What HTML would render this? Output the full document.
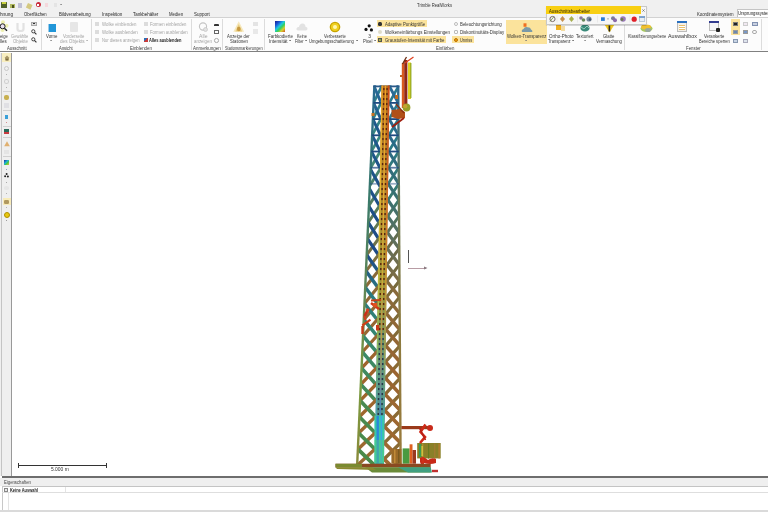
<!DOCTYPE html>
<html><head><meta charset="utf-8">
<style>
*{margin:0;padding:0;box-sizing:border-box}
html,body{width:768px;height:512px;overflow:hidden;background:#fff;font-family:"Liberation Sans",sans-serif;color:#222}
.a{position:absolute;white-space:nowrap;line-height:1;transform-origin:0 0}
.t{font-size:4.9px}
.g{color:#a8a8a8}
.tab{font-size:5.2px;top:11.6px;color:#333}
.lbl{font-size:4.9px;top:45.6px;color:#444}
.sep{position:absolute;top:19px;width:1px;height:31px;background:#dcdcdc}
.hl{position:absolute;background:#fbe39c}
</style></head><body>
<div id="root" style="position:absolute;left:0;top:0;width:768px;height:512px;overflow:hidden;will-change:transform;background:#fff">
<!-- title/tab bar -->
<div class="a" style="left:0;top:0;width:768px;height:17px;background:#f0f0f0"></div>
<div class="a" style="left:0;top:16.8px;width:768px;height:1.2px;background:#d2d2d2"></div>
<!-- ribbon body -->
<div class="a" style="left:0;top:18px;width:768px;height:33.5px;background:#fcfcfc"></div>
<div class="a" style="left:0;top:51.2px;width:768px;height:1.3px;background:#808080"></div>
<!-- title -->
<!-- tabs -->
<div class="a" style="left:736.6px;top:8.6px;width:40px;height:8.6px;background:#fff;border:0.6px solid #c4c4c4;border-bottom:none"></div>
<!-- separators -->
<div class="sep" style="left:41px"></div>
<div class="sep" style="left:90.5px"></div>
<div class="sep" style="left:190.5px"></div>
<div class="sep" style="left:222.3px"></div>
<div class="sep" style="left:264px"></div>
<div class="sep" style="left:624.4px"></div>
<div class="sep" style="left:761px"></div>
<!-- group labels -->

<!-- Ausschnitt -->
<svg class="a" style="left:-1px;top:20px" width="10" height="13" viewBox="0 0 10 13"><circle cx="4" cy="2.2" r="2" fill="#eef0b0"/><circle cx="7.5" cy="5.8" r="2" fill="#eef0b0"/><circle cx="3.5" cy="10" r="2" fill="#eef0b0"/><circle cx="3.6" cy="6.3" r="2.5" fill="#e8e0f0" stroke="#222" stroke-width="1"/><line x1="5.4" y1="8.2" x2="8" y2="10.8" stroke="#222" stroke-width="1.5"/></svg>
<svg class="a" style="left:15.5px;top:21px" width="9" height="11" viewBox="0 0 9 11"><path d="M1.5 2 L1.5 8 Q1.5 10 4.5 10 Q7.5 10 7.5 8 L7.5 2" fill="none" stroke="#e2e2e2" stroke-width="2.2"/></svg>
<div class="a" style="left:31px;top:21.5px;width:5.5px;height:4px;background:#ddd;border:0.5px solid #aaa"></div>
<div class="a" style="left:32.6px;top:22.8px;width:2px;height:1px;background:#333"></div>
<svg class="a" style="left:31px;top:28.5px" width="6" height="6" viewBox="0 0 6 6"><circle cx="2.3" cy="2.3" r="1.6" fill="none" stroke="#333" stroke-width=".9"/><line x1="3.4" y1="3.4" x2="5.4" y2="5.4" stroke="#333" stroke-width="1.1"/></svg>
<svg class="a" style="left:31px;top:36.5px" width="6" height="6" viewBox="0 0 6 6"><circle cx="2.3" cy="2.3" r="1.6" fill="none" stroke="#333" stroke-width=".9"/><line x1="3.4" y1="3.4" x2="5.4" y2="5.4" stroke="#333" stroke-width="1.1"/></svg>

<!-- Ansicht -->
<div class="a" style="left:49px;top:23.8px;width:7.3px;height:7.8px;background:#2196d8;box-shadow:-1px 0 0 #9ccbe8"></div>
<div class="a" style="left:70px;top:22px;width:8px;height:9.5px;background:#e6e6e6;border-radius:1px"></div>

<!-- Einblenden -->
<div class="a" style="left:95px;top:22px;width:3.5px;height:3.5px;background:#dcdcdc"></div>
<div class="a" style="left:95px;top:30px;width:3.5px;height:3.5px;background:#dcdcdc"></div>
<div class="a" style="left:95px;top:38.2px;width:3.5px;height:3.5px;background:#dcdcdc"></div>
<div class="a" style="left:144px;top:22px;width:3.5px;height:3.5px;background:#dcdcdc"></div>
<div class="a" style="left:144px;top:30px;width:3.5px;height:3.5px;background:#dcdcdc"></div>
<div class="a" style="left:143.5px;top:38.2px;width:4px;height:4px;background:linear-gradient(135deg,#2a6fb8 50%,#c83a3a 50%)"></div>

<!-- Anmerkungen -->
<svg class="a" style="left:197.5px;top:22px" width="12" height="11" viewBox="0 0 12 11"><circle cx="5" cy="4.5" r="3.6" fill="none" stroke="#c4c4c4" stroke-width="1.1"/><circle cx="7.5" cy="7.5" r="2" fill="#e2e2e2" stroke="#c4c4c4" stroke-width=".7"/></svg>
<div class="a" style="left:214px;top:23.5px;width:5px;height:2.5px;background:#333;border-radius:1px 1px 0 0"></div>
<div class="a" style="left:214px;top:30px;width:5px;height:4px;border:0.7px solid #666"></div>
<div class="a" style="left:214.3px;top:38px;width:4.5px;height:4.5px;border:0.6px solid #aaa;border-radius:50%"></div>

<!-- Stationsmarkierungen -->
<svg class="a" style="left:232.5px;top:20.8px" width="11.5" height="11" viewBox="0 0 11.5 11"><path d="M5.75 0.3 L11.2 10.8 L0.3 10.8 Z" fill="#f6e8bc"/><path d="M5.75 3 L9.2 10.5 L2.3 10.5Z" fill="#e8cc80"/><ellipse cx="5.75" cy="8" rx="1.8" ry="2.2" fill="#c89a40"/></svg>
<div class="a" style="left:252.5px;top:21.5px;width:5px;height:4.5px;background:#e4e4e4"></div>
<div class="a" style="left:252.5px;top:29px;width:5px;height:4.5px;background:#e8e8e8"></div>

<!-- Einfärben -->
<div class="a" style="left:274.6px;top:21.4px;width:10.8px;height:10.2px;background:linear-gradient(135deg,#1a1a8c 0%,#1a58d8 25%,#20c8e0 45%,#30d060 60%,#d8d030 78%,#d05020 100%)"></div>
<svg class="a" style="left:295.5px;top:22px" width="12" height="10" viewBox="0 0 12 10"><path d="M2 8.5 Q0 8.5 0.5 6.5 Q1 4.5 3 5 Q3.5 1.5 6.5 1.5 Q9.5 1.8 9.5 4.8 Q11.8 5 11.5 7 Q11 8.5 9.5 8.5Z" fill="#e2e2e2"/></svg>
<svg class="a" style="left:328.5px;top:20.8px" width="12" height="12" viewBox="0 0 12 12"><circle cx="6" cy="6" r="5.3" fill="#c8a400"/><circle cx="6" cy="6" r="4" fill="#f0d020"/><circle cx="6" cy="6" r="2" fill="#fff8b0"/></svg>
<svg class="a" style="left:364px;top:23.5px" width="10" height="8" viewBox="0 0 10 8"><circle cx="5.2" cy="1.8" r="1.6" fill="#111"/><circle cx="2" cy="5.4" r="1.6" fill="#111"/><circle cx="7.4" cy="5.9" r="1.6" fill="#111"/></svg>

<div class="hl" style="left:376.5px;top:20.2px;width:50px;height:7.2px"></div>
<div class="hl" style="left:376.5px;top:36.4px;width:69.2px;height:6.8px"></div>
<div class="a" style="left:378px;top:21.5px;width:3.5px;height:4px;background:#333;border-radius:40%"></div>
<div class="a" style="left:378px;top:30px;width:4px;height:4px;background:#dedbc8;border-radius:50%"></div>
<div class="a" style="left:378px;top:37.8px;width:4px;height:4px;border:0.6px solid #555;background:linear-gradient(45deg,#e0c040,#60a040)"></div>

<div class="a" style="left:453.5px;top:21.8px;width:4px;height:4px;border:0.6px solid #bbb;border-radius:50%"></div>
<div class="a" style="left:453.5px;top:30px;width:4px;height:4px;border:0.6px solid #bbb;border-radius:1px"></div>
<div class="hl" style="left:451.7px;top:36.4px;width:22.2px;height:6.8px"></div>
<div class="a" style="left:453.5px;top:37.5px;width:4.4px;height:4.4px;background:#e8a010;border-radius:50%;border:0.6px solid #c07000"></div>

<div class="hl" style="left:506px;top:19.8px;width:40.7px;height:23.9px"></div>
<svg class="a" style="left:520.5px;top:22.5px" width="12" height="10" viewBox="0 0 12 10"><rect x="2.5" y="0.3" width="3" height="3.5" fill="#f07020"/><path d="M1 9 Q0.2 6.5 2.5 6 Q3.5 3.5 6.5 4.2 Q9.5 4 10 6.5 Q11.8 7 11.3 9Z" fill="#7a9aa8"/></svg>

<div class="a" style="left:556px;top:24.4px;width:5px;height:6px;background:#f0b020"></div>
<div class="a" style="left:561px;top:25.5px;width:3.5px;height:5px;background:#f4dca0"></div>
<svg class="a" style="left:579.5px;top:23.5px" width="10" height="8" viewBox="0 0 10 8"><ellipse cx="5" cy="4" rx="4.6" ry="3.6" fill="#3a8a7a"/><path d="M1 3 L4 5 L7 2 L9 4" stroke="#a8d8c8" stroke-width=".8" fill="none"/></svg>
<svg class="a" style="left:603.5px;top:23.5px" width="11" height="9" viewBox="0 0 11 9"><path d="M0.5 0.5 L10.5 0.5 L5.5 8.5Z" fill="#f0c820"/><rect x="4.6" y="1.5" width="1.6" height="6" fill="#222"/></svg>

<!-- Fenster -->
<svg class="a" style="left:639.5px;top:22.5px" width="13" height="10" viewBox="0 0 13 10"><ellipse cx="6.5" cy="5.5" rx="6" ry="3.5" fill="#a8c860"/><ellipse cx="6" cy="4" rx="5" ry="2.4" fill="#f0c030"/><ellipse cx="8" cy="7" rx="3" ry="2" fill="#98a8a0"/></svg>
<div class="a" style="left:677px;top:21px;width:9.7px;height:11px;background:#f4f0e8;border:0.5px solid #bbb"></div>
<div class="a" style="left:677px;top:21px;width:9.7px;height:2px;background:#2a70c0"></div>
<div class="a" style="left:678.5px;top:25px;width:6.5px;height:5px;background:repeating-linear-gradient(0deg,#e8c070 0 1px,#fff 1px 2px)"></div>
<div class="a" style="left:709px;top:21px;width:10px;height:10px;background:#f4f4f8;border:0.5px solid #bbb"></div>
<div class="a" style="left:709px;top:21px;width:10px;height:1.8px;background:#303a90"></div>
<div class="a" style="left:716px;top:27.5px;width:4px;height:4.5px;background:#222;border-radius:1px"></div>
<div class="hl" style="left:731px;top:19.4px;width:9px;height:16.1px"></div>
<div class="a" style="left:733px;top:21.5px;width:5px;height:4px;background:#222;border:0.6px solid #777"></div>
<div class="a" style="left:733px;top:29.5px;width:5px;height:4.5px;background:#6a8ab0;border:0.5px solid #999"></div>
<div class="a" style="left:733px;top:38.5px;width:5px;height:4px;background:#c8d4e4;border:0.5px solid #8898b0"></div>
<div class="a" style="left:742.5px;top:21.5px;width:5px;height:4.5px;background:#f0e8f0;border:0.5px solid #ccc"></div>
<div class="a" style="left:742.5px;top:29.5px;width:5px;height:4.5px;background:#7898c8;border:0.5px solid #999"></div>
<div class="a" style="left:742.5px;top:38.5px;width:5px;height:4px;background:#dde4ec;border:0.5px solid #aab"></div>
<div class="a" style="left:751.5px;top:21.5px;width:6px;height:4.5px;background:#c8d0e0;border:0.5px solid #8090b0"></div>
<div class="a" style="left:752px;top:29.5px;width:4.5px;height:4.5px;border:0.6px solid #aaa;border-radius:50%"></div>

<!-- quick access -->
<div class="a" style="left:1px;top:2px;width:6px;height:5.5px;background:#50602a;border-radius:0.5px"></div>
<div class="a" style="left:2.2px;top:2.4px;width:3.6px;height:2px;background:#c8d040"></div>
<div class="a" style="left:10px;top:3.5px;width:5px;height:4px;background:#b0b860"></div>
<div class="a" style="left:11.5px;top:4.5px;width:2.5px;height:3px;background:#4a5020"></div>
<div class="a" style="left:18px;top:3px;width:3.8px;height:4.5px;background:#c0c0d4"></div>
<div class="a" style="left:27.5px;top:3px;width:5px;height:4.5px;background:#d4c880;transform:rotate(25deg)"></div>
<div class="a" style="left:35.5px;top:2.3px;width:5px;height:5px;background:#c82838;border-radius:50%"></div>
<div class="a" style="left:37.2px;top:3.5px;width:1.8px;height:2px;background:#fff"></div>
<div class="a" style="left:45px;top:3px;width:2.5px;height:3.5px;background:#f4d8dc"></div>
<div class="a" style="left:54px;top:3px;width:3px;height:3.5px;background:#e4e4e4"></div>

<!-- floating toolbar -->
<div class="a" style="left:545.8px;top:5.5px;width:101.4px;height:19.4px;background:#f6f6f6;border:0.6px solid #c8c8c8;box-shadow:0 0.5px 1px rgba(0,0,0,.15)"></div>
<div class="a" style="left:546.2px;top:5.9px;width:94.6px;height:7.8px;background:#f8cf12"></div>
<svg class="a" style="left:546px;top:14px" width="101" height="10" viewBox="0 0 101 10">
 <circle cx="6.5" cy="5" r="2.6" fill="none" stroke="#7a6a6a" stroke-width="1"/><path d="M4 7.5 L8 2.5" stroke="#6a8a40" stroke-width=".8"/>
 <line x1="11" y1="1.5" x2="11" y2="8.5" stroke="#ddd" stroke-width=".5"/>
 <path d="M16.5 2 L19 5 L16.5 8 L14 5Z" fill="#c89050"/>
 <path d="M25.5 2 L28 5 L25.5 8 L23 5Z" fill="#a8b050"/>
 <line x1="31.5" y1="1.5" x2="31.5" y2="8.5" stroke="#ddd" stroke-width=".5"/>
 <circle cx="35" cy="4" r="1.8" fill="#8a7a9a"/><circle cx="37.5" cy="6" r="1.8" fill="#6a8a5a"/>
 <circle cx="43" cy="5" r="2.6" fill="#7a8aa0"/><circle cx="44" cy="5.5" r="1.3" fill="#4a5a70"/>
 <line x1="51.5" y1="1.5" x2="51.5" y2="8.5" stroke="#ddd" stroke-width=".5"/>
 <rect x="55" y="3.3" width="3.8" height="3.6" fill="#2a7ad0"/>
 <path d="M61 4.5 L63 4.5 L62 5.7Z" fill="#888"/>
 <circle cx="67" cy="4.2" r="2" fill="#7a7a9a"/><circle cx="69" cy="6.2" r="2" fill="#8a6aaa"/>
 <circle cx="77" cy="5" r="2.8" fill="#9a7ab8"/><circle cx="76" cy="5.5" r="1.4" fill="#6a7a50"/>
 <line x1="84" y1="1.5" x2="84" y2="8.5" stroke="#ddd" stroke-width=".5"/>
 <circle cx="88.2" cy="5.2" r="2.6" fill="#e0202a"/>
 <rect x="93.3" y="2.5" width="5.5" height="5" fill="#e8eef4" stroke="#8aa0b8" stroke-width=".5"/><rect x="93.3" y="2.5" width="5.5" height="1.2" fill="#4a80c0"/>
</svg>
<!-- left strip -->
<div class="a" style="left:0;top:52.6px;width:12.2px;height:423.6px;background:#efefef"></div>
<div class="a" style="left:1.2px;top:52.6px;width:0.8px;height:423.6px;background:#c4c4c4"></div>
<div class="a" style="left:10.9px;top:52.6px;width:1.3px;height:423.6px;background:#999"></div>
<div class="a" style="left:2px;top:53.2px;width:8.8px;height:9px;background:#f8eec0"></div>
<svg class="a" style="left:3.5px;top:54.8px" width="6" height="6" viewBox="0 0 6 6"><path d="M0.5 3 L3 0.5 L5.5 3 L5 3 L5 5.5 L1 5.5 L1 3Z" fill="#a89868"/><rect x="2.3" y="3.8" width="1.4" height="1.7" fill="#6a5a30"/></svg>
<div class="a" style="left:4px;top:66px;width:5px;height:5px;border:0.8px solid #c8c8c8;border-radius:50%"></div>
<div class="a" style="left:3.8px;top:78.5px;width:5.4px;height:5px;border:0.8px solid #cfcfcf;border-radius:50%"></div>
<div class="a" style="left:2.5px;top:90.8px;width:8px;height:0.6px;background:#d4d4d4"></div>
<div class="a" style="left:4px;top:94.5px;width:5px;height:5px;background:#c8b050;border-radius:40%"></div>
<div class="a" style="left:4px;top:103px;width:5px;height:4.5px;background:#e0e0e4"></div>
<div class="a" style="left:2.5px;top:110px;width:8px;height:0.6px;background:#d0d0d0"></div>
<div class="a" style="left:4.6px;top:115px;width:3.6px;height:3.6px;background:#3aa0d8"></div>
<div class="a" style="left:2.5px;top:126px;width:8px;height:0.6px;background:#d0d0d0"></div>
<div class="a" style="left:4px;top:129px;width:5px;height:5px;background:linear-gradient(180deg,#2a6a5a 60%,#c83a40 60%)"></div>
<div class="a" style="left:2.5px;top:137px;width:8px;height:0.6px;background:#d0d0d0"></div>
<svg class="a" style="left:3.5px;top:141.2px" width="6" height="5.5" viewBox="0 0 6 5.5"><path d="M3 0.3 L5.8 5.3 L0.2 5.3Z" fill="#e0b070"/></svg>
<div class="a" style="left:4px;top:149.5px;width:5px;height:4.5px;background:#e4e4e4"></div>
<div class="a" style="left:2.5px;top:156px;width:8px;height:0.6px;background:#d0d0d0"></div>
<div class="a" style="left:4px;top:160px;width:5px;height:5px;background:linear-gradient(135deg,#1a2a9a,#20b8d8 45%,#40c850 60%,#e0c030)"></div>
<svg class="a" style="left:3.8px;top:173px" width="5" height="5" viewBox="0 0 5 5"><circle cx="2.6" cy="1.1" r="1" fill="#222"/><circle cx="1.1" cy="3.3" r="1" fill="#222"/><circle cx="3.9" cy="3.6" r="1" fill="#222"/></svg>
<div class="a" style="left:3.8px;top:186px;width:5.4px;height:4px;background:#e6e6e6;border-radius:50%"></div>
<div class="a" style="left:2.5px;top:198px;width:8px;height:7px;background:#f8ebb8"></div>
<div class="a" style="left:4.2px;top:199.5px;width:4.5px;height:4px;background:#b09860;border-radius:30%"></div>
<div class="a" style="left:3.5px;top:212px;width:6px;height:6px;background:#e8c810;border-radius:50%;border:0.8px solid #b09000"></div>

<!-- viewport bottom + properties -->
<div class="a" style="left:2px;top:475.8px;width:766px;height:2px;background:#6e6e6e"></div>
<div class="a" style="left:0;top:477.8px;width:768px;height:8.6px;background:#efefef"></div>
<div class="a" style="left:2px;top:486.3px;width:766px;height:0.7px;background:#c4c4c4"></div>
<div class="a" style="left:2px;top:487px;width:766px;height:24px;background:#fff"></div>
<div class="a" style="left:2.2px;top:486px;width:0.7px;height:25px;background:#c8c8c8"></div>
<div class="a" style="left:8.2px;top:492.5px;width:0.5px;height:18px;background:#e4e4e4"></div>
<div class="a" style="left:2px;top:492.3px;width:766px;height:0.5px;background:#dedede"></div>
<div class="a" style="left:64.5px;top:487px;width:0.5px;height:5.3px;background:#e4e4e4"></div>
<div class="a" style="left:4.2px;top:488.3px;width:3.4px;height:3.4px;background:#e8e8e8;border:0.5px solid #888"></div>
<div class="a" style="left:0;top:510.4px;width:768px;height:1.6px;background:#dadada"></div>

<!-- scale bar -->
<div class="a" style="left:18.2px;top:464.6px;width:88.7px;height:1.2px;background:#333"></div>
<div class="a" style="left:18px;top:462.5px;width:0.9px;height:5.5px;background:#333"></div>
<div class="a" style="left:106.3px;top:462.5px;width:0.9px;height:5.5px;background:#333"></div>

<!-- axis widget -->
<div class="a" style="left:408.2px;top:250px;width:0.9px;height:12.6px;background:#555"></div>
<div class="a" style="left:408px;top:267.6px;width:18px;height:0.9px;background:#b89ca4"></div>
<svg class="a" style="left:424px;top:266px" width="4" height="4" viewBox="0 0 4 4"><path d="M0 0.5 L3.5 2 L0 3.5Z" fill="#8a7a80"/></svg>
<svg class="a" style="left:5.7px;top:73.7px" width="1.8" height="1.1" viewBox="0 0 1.8 1.1"><path d="M0 0 L1.8 0 L0.9 1.1Z" fill="#888"/></svg>
<svg class="a" style="left:5.7px;top:86.7px" width="1.8" height="1.1" viewBox="0 0 1.8 1.1"><path d="M0 0 L1.8 0 L0.9 1.1Z" fill="#888"/></svg>
<svg class="a" style="left:5.7px;top:121.9px" width="1.8" height="1.1" viewBox="0 0 1.8 1.1"><path d="M0 0 L1.8 0 L0.9 1.1Z" fill="#c05050"/></svg>
<svg class="a" style="left:5.7px;top:168.6px" width="1.8" height="1.1" viewBox="0 0 1.8 1.1"><path d="M0 0 L1.8 0 L0.9 1.1Z" fill="#5070a0"/></svg>
<svg class="a" style="left:5.7px;top:181.6px" width="1.8" height="1.1" viewBox="0 0 1.8 1.1"><path d="M0 0 L1.8 0 L0.9 1.1Z" fill="#777"/></svg>
<svg class="a" style="left:5.7px;top:193.1px" width="1.8" height="1.1" viewBox="0 0 1.8 1.1"><path d="M0 0 L1.8 0 L0.9 1.1Z" fill="#888"/></svg>
<svg class="a" style="left:5.7px;top:207.1px" width="1.8" height="1.1" viewBox="0 0 1.8 1.1"><path d="M0 0 L1.8 0 L0.9 1.1Z" fill="#888"/></svg>
<svg class="a" style="left:5.7px;top:219.6px" width="1.8" height="1.1" viewBox="0 0 1.8 1.1"><path d="M0 0 L1.8 0 L0.9 1.1Z" fill="#666"/></svg><svg class="a" style="left:0;top:0" width="768" height="512" viewBox="0 0 768 512">
<defs>
<clipPath id="cl"><polygon points="374.4,85.5 381.9,85.5 375.1,464.0 357.2,464.0"/></clipPath>
<clipPath id="cr"><polygon points="389.1,85.5 398.2,85.5 400.6,464.0 383.5,464.0"/></clipPath>
<linearGradient id="gl1" gradientUnits="userSpaceOnUse" x1="0" y1="85" x2="0" y2="465"><stop offset="0" stop-color="#2a6a98"/><stop offset="0.1" stop-color="#1f5a8c"/><stop offset="0.45" stop-color="#1e4a86"/><stop offset="0.55" stop-color="#2a7a80"/><stop offset="0.7" stop-color="#3a8a6a"/><stop offset="0.85" stop-color="#4a8a50"/><stop offset="1" stop-color="#4a8a48"/></linearGradient>
<linearGradient id="gl2" gradientUnits="userSpaceOnUse" x1="0" y1="85" x2="0" y2="465"><stop offset="0" stop-color="#2a7a90"/><stop offset="0.15" stop-color="#3a8a80"/><stop offset="0.35" stop-color="#5a7a58"/><stop offset="0.5" stop-color="#8a6a38"/><stop offset="0.75" stop-color="#a0642c"/><stop offset="1" stop-color="#9a6a30"/></linearGradient>
<linearGradient id="gr1" gradientUnits="userSpaceOnUse" x1="0" y1="85" x2="0" y2="465"><stop offset="0" stop-color="#2a6a98"/><stop offset="0.15" stop-color="#2a6a88"/><stop offset="0.3" stop-color="#3a7070"/><stop offset="0.4" stop-color="#5a7060"/><stop offset="0.55" stop-color="#8a6a3a"/><stop offset="0.75" stop-color="#9a6430"/><stop offset="1" stop-color="#a06a30"/></linearGradient>
<linearGradient id="gr2" gradientUnits="userSpaceOnUse" x1="0" y1="85" x2="0" y2="465"><stop offset="0" stop-color="#2a7a90"/><stop offset="0.15" stop-color="#2a7a88"/><stop offset="0.3" stop-color="#3a7a70"/><stop offset="0.42" stop-color="#6a6a4a"/><stop offset="0.55" stop-color="#7a6a3a"/><stop offset="0.75" stop-color="#8a6a34"/><stop offset="1" stop-color="#8a6a34"/></linearGradient>
<linearGradient id="gll" gradientUnits="userSpaceOnUse" x1="0" y1="85" x2="0" y2="465"><stop offset="0" stop-color="#2a6a90"/><stop offset="0.3" stop-color="#3a7a6a"/><stop offset="0.6" stop-color="#6a8a50"/><stop offset="0.8" stop-color="#7a9a40"/><stop offset="1" stop-color="#8a8a3a"/></linearGradient>
<linearGradient id="glr" gradientUnits="userSpaceOnUse" x1="0" y1="85" x2="0" y2="465"><stop offset="0" stop-color="#2a6a90"/><stop offset="0.3" stop-color="#6a7a58"/><stop offset="0.6" stop-color="#8a7a40"/><stop offset="1" stop-color="#9a7a3a"/></linearGradient>
<linearGradient id="glad" gradientUnits="userSpaceOnUse" x1="0" y1="85" x2="0" y2="465"><stop offset="0" stop-color="#f0b020"/><stop offset="0.35" stop-color="#e0c030"/><stop offset="0.55" stop-color="#b8c040"/><stop offset="0.7" stop-color="#7aa868"/><stop offset="0.8" stop-color="#4a9ab8"/><stop offset="1" stop-color="#4a9ab8"/></linearGradient>
<linearGradient id="gladm" gradientUnits="userSpaceOnUse" x1="0" y1="85" x2="0" y2="465"><stop offset="0" stop-color="#e87018"/><stop offset="0.4" stop-color="#d88a28"/><stop offset="0.6" stop-color="#a08a40"/><stop offset="0.8" stop-color="#5a8a90"/><stop offset="1" stop-color="#5a8a90"/></linearGradient>
</defs>
<g clip-path="url(#cl)" fill="none" stroke-linecap="square">
<path d="M375.1 70.5 L382.0 54.3" stroke="url(#gl2)" stroke-width="2.60"/><path d="M375.8 54.3 L381.7 70.5" stroke="url(#gl1)" stroke-width="2.90"/>
<path d="M374.3 86.7 L381.7 70.5" stroke="url(#gl2)" stroke-width="2.60"/><path d="M375.1 70.5 L381.4 86.7" stroke="url(#gl1)" stroke-width="2.90"/>
<path d="M373.6 102.9 L381.4 86.7" stroke="url(#gl2)" stroke-width="2.62"/><path d="M374.3 86.7 L381.1 102.9" stroke="url(#gl1)" stroke-width="2.92"/>
<path d="M372.9 119.1 L381.1 102.9" stroke="url(#gl2)" stroke-width="2.66"/><path d="M373.6 102.9 L380.8 119.1" stroke="url(#gl1)" stroke-width="2.96"/>
<path d="M372.1 135.3 L380.8 119.1" stroke="url(#gl2)" stroke-width="2.70"/><path d="M372.9 119.1 L380.5 135.3" stroke="url(#gl1)" stroke-width="3.00"/>
<path d="M371.4 151.5 L380.5 135.3" stroke="url(#gl2)" stroke-width="2.74"/><path d="M372.1 135.3 L380.2 151.5" stroke="url(#gl1)" stroke-width="3.04"/>
<path d="M370.7 167.7 L380.2 151.5" stroke="url(#gl2)" stroke-width="2.78"/><path d="M371.4 151.5 L379.9 167.7" stroke="url(#gl1)" stroke-width="3.08"/>
<path d="M369.9 185.6 L379.9 169.4" stroke="url(#gl2)" stroke-width="2.82"/><path d="M370.6 169.4 L379.6 185.6" stroke="url(#gl1)" stroke-width="3.12"/>
<path d="M369.0 205.4 L379.5 189.2" stroke="url(#gl2)" stroke-width="2.87"/><path d="M369.7 189.2 L379.2 205.4" stroke="url(#gl1)" stroke-width="3.17"/>
<path d="M368.2 222.5 L379.2 206.3" stroke="url(#gl2)" stroke-width="2.91"/><path d="M368.9 206.3 L378.9 222.5" stroke="url(#gl1)" stroke-width="3.21"/>
<path d="M367.4 238.7 L378.9 222.5" stroke="url(#gl2)" stroke-width="2.95"/><path d="M368.2 222.5 L378.6 238.7" stroke="url(#gl1)" stroke-width="3.25"/>
<path d="M366.7 254.9 L378.6 238.7" stroke="url(#gl2)" stroke-width="2.98"/><path d="M367.4 238.7 L378.4 254.9" stroke="url(#gl1)" stroke-width="3.28"/>
<path d="M366.0 271.1 L378.4 254.9" stroke="url(#gl2)" stroke-width="3.02"/><path d="M366.7 254.9 L378.1 271.1" stroke="url(#gl1)" stroke-width="3.32"/>
<path d="M365.2 287.3 L378.1 271.1" stroke="url(#gl2)" stroke-width="3.06"/><path d="M366.0 271.1 L377.8 287.3" stroke="url(#gl1)" stroke-width="3.36"/>
<path d="M364.5 303.5 L377.8 287.3" stroke="url(#gl2)" stroke-width="3.10"/><path d="M365.2 287.3 L377.5 303.5" stroke="url(#gl1)" stroke-width="3.40"/>
<path d="M363.8 319.7 L377.5 303.5" stroke="url(#gl2)" stroke-width="3.14"/><path d="M364.5 303.5 L377.2 319.7" stroke="url(#gl1)" stroke-width="3.44"/>
<path d="M363.0 335.9 L377.2 319.7" stroke="url(#gl2)" stroke-width="3.18"/><path d="M363.8 319.7 L376.9 335.9" stroke="url(#gl1)" stroke-width="3.48"/>
<path d="M362.3 352.0 L376.9 335.9" stroke="url(#gl2)" stroke-width="3.21"/><path d="M363.0 335.9 L376.6 352.0" stroke="url(#gl1)" stroke-width="3.51"/>
<path d="M361.6 368.2 L376.6 352.0" stroke="url(#gl2)" stroke-width="3.25"/><path d="M362.3 352.0 L376.3 368.2" stroke="url(#gl1)" stroke-width="3.55"/>
<path d="M360.8 384.4 L376.3 368.2" stroke="url(#gl2)" stroke-width="3.29"/><path d="M361.6 368.2 L376.0 384.4" stroke="url(#gl1)" stroke-width="3.59"/>
<path d="M360.1 400.6 L376.0 384.4" stroke="url(#gl2)" stroke-width="3.33"/><path d="M360.8 384.4 L375.7 400.6" stroke="url(#gl1)" stroke-width="3.63"/>
<path d="M359.3 416.8 L375.7 400.6" stroke="url(#gl2)" stroke-width="3.37"/><path d="M360.1 400.6 L375.4 416.8" stroke="url(#gl1)" stroke-width="3.67"/>
<path d="M358.6 433.0 L375.4 416.8" stroke="url(#gl2)" stroke-width="3.41"/><path d="M359.3 416.8 L375.2 433.0" stroke="url(#gl1)" stroke-width="3.71"/>
<path d="M357.9 449.2 L375.2 433.0" stroke="url(#gl2)" stroke-width="3.45"/><path d="M358.6 433.0 L374.9 449.2" stroke="url(#gl1)" stroke-width="3.75"/>
<path d="M357.1 465.4 L374.9 449.2" stroke="url(#gl2)" stroke-width="3.48"/><path d="M357.9 449.2 L374.6 465.4" stroke="url(#gl1)" stroke-width="3.78"/>
<path d="M356.4 481.6 L374.6 465.4" stroke="url(#gl2)" stroke-width="3.50"/><path d="M357.1 465.4 L374.3 481.6" stroke="url(#gl1)" stroke-width="3.80"/>
<path d="M355.7 497.8 L374.3 481.6" stroke="url(#gl2)" stroke-width="3.50"/><path d="M356.4 481.6 L374.0 497.8" stroke="url(#gl1)" stroke-width="3.80"/>
</g>
<g clip-path="url(#cr)" fill="none" stroke-linecap="square">
<path d="M389.8 70.5 L398.0 54.3" stroke="url(#gr2)" stroke-width="2.60"/><path d="M390.1 54.3 L398.1 70.5" stroke="url(#gr1)" stroke-width="2.90"/>
<path d="M389.6 86.7 L398.1 70.5" stroke="url(#gr2)" stroke-width="2.60"/><path d="M389.8 70.5 L398.2 86.7" stroke="url(#gr1)" stroke-width="2.90"/>
<path d="M389.3 102.9 L398.2 86.7" stroke="url(#gr2)" stroke-width="2.62"/><path d="M389.6 86.7 L398.3 102.9" stroke="url(#gr1)" stroke-width="2.92"/>
<path d="M389.1 119.1 L398.3 102.9" stroke="url(#gr2)" stroke-width="2.66"/><path d="M389.3 102.9 L398.4 119.1" stroke="url(#gr1)" stroke-width="2.96"/>
<path d="M388.9 135.3 L398.4 119.1" stroke="url(#gr2)" stroke-width="2.70"/><path d="M389.1 119.1 L398.5 135.3" stroke="url(#gr1)" stroke-width="3.00"/>
<path d="M388.6 151.5 L398.5 135.3" stroke="url(#gr2)" stroke-width="2.74"/><path d="M388.9 135.3 L398.6 151.5" stroke="url(#gr1)" stroke-width="3.04"/>
<path d="M388.4 167.7 L398.6 151.5" stroke="url(#gr2)" stroke-width="2.78"/><path d="M388.6 151.5 L398.7 167.7" stroke="url(#gr1)" stroke-width="3.08"/>
<path d="M388.1 183.8 L398.7 167.7" stroke="url(#gr2)" stroke-width="2.81"/><path d="M388.4 167.7 L398.8 183.8" stroke="url(#gr1)" stroke-width="3.11"/>
<path d="M387.9 200.0 L398.8 183.8" stroke="url(#gr2)" stroke-width="2.85"/><path d="M388.1 183.8 L398.9 200.0" stroke="url(#gr1)" stroke-width="3.15"/>
<path d="M387.7 216.2 L398.9 200.0" stroke="url(#gr2)" stroke-width="2.89"/><path d="M387.9 200.0 L399.0 216.2" stroke="url(#gr1)" stroke-width="3.19"/>
<path d="M387.4 232.4 L399.0 216.2" stroke="url(#gr2)" stroke-width="2.93"/><path d="M387.7 216.2 L399.1 232.4" stroke="url(#gr1)" stroke-width="3.23"/>
<path d="M387.2 248.6 L399.1 232.4" stroke="url(#gr2)" stroke-width="2.97"/><path d="M387.4 232.4 L399.2 248.6" stroke="url(#gr1)" stroke-width="3.27"/>
<path d="M386.9 264.8 L399.2 248.6" stroke="url(#gr2)" stroke-width="3.01"/><path d="M387.2 248.6 L399.3 264.8" stroke="url(#gr1)" stroke-width="3.31"/>
<path d="M386.7 281.0 L399.3 264.8" stroke="url(#gr2)" stroke-width="3.05"/><path d="M386.9 264.8 L399.4 281.0" stroke="url(#gr1)" stroke-width="3.35"/>
<path d="M386.5 297.2 L399.4 281.0" stroke="url(#gr2)" stroke-width="3.08"/><path d="M386.7 281.0 L399.5 297.2" stroke="url(#gr1)" stroke-width="3.38"/>
<path d="M386.2 313.4 L399.5 297.2" stroke="url(#gr2)" stroke-width="3.12"/><path d="M386.5 297.2 L399.6 313.4" stroke="url(#gr1)" stroke-width="3.42"/>
<path d="M386.0 329.6 L399.6 313.4" stroke="url(#gr2)" stroke-width="3.16"/><path d="M386.2 313.4 L399.7 329.6" stroke="url(#gr1)" stroke-width="3.46"/>
<path d="M385.7 345.7 L399.7 329.6" stroke="url(#gr2)" stroke-width="3.20"/><path d="M386.0 329.6 L399.9 345.7" stroke="url(#gr1)" stroke-width="3.50"/>
<path d="M385.5 361.9 L399.9 345.7" stroke="url(#gr2)" stroke-width="3.24"/><path d="M385.7 345.7 L400.0 361.9" stroke="url(#gr1)" stroke-width="3.54"/>
<path d="M385.3 378.1 L400.0 361.9" stroke="url(#gr2)" stroke-width="3.28"/><path d="M385.5 361.9 L400.1 378.1" stroke="url(#gr1)" stroke-width="3.58"/>
<path d="M385.0 394.3 L400.1 378.1" stroke="url(#gr2)" stroke-width="3.32"/><path d="M385.3 378.1 L400.2 394.3" stroke="url(#gr1)" stroke-width="3.62"/>
<path d="M384.8 410.5 L400.2 394.3" stroke="url(#gr2)" stroke-width="3.35"/><path d="M385.0 394.3 L400.3 410.5" stroke="url(#gr1)" stroke-width="3.65"/>
<path d="M384.6 426.7 L400.3 410.5" stroke="url(#gr2)" stroke-width="3.39"/><path d="M384.8 410.5 L400.4 426.7" stroke="url(#gr1)" stroke-width="3.69"/>
<path d="M384.3 442.9 L400.4 426.7" stroke="url(#gr2)" stroke-width="3.43"/><path d="M384.6 426.7 L400.5 442.9" stroke="url(#gr1)" stroke-width="3.73"/>
<path d="M384.1 459.1 L400.5 442.9" stroke="url(#gr2)" stroke-width="3.47"/><path d="M384.3 442.9 L400.6 459.1" stroke="url(#gr1)" stroke-width="3.77"/>
<path d="M383.8 475.3 L400.6 459.1" stroke="url(#gr2)" stroke-width="3.50"/><path d="M384.1 459.1 L400.7 475.3" stroke="url(#gr1)" stroke-width="3.80"/>
<path d="M383.6 491.5 L400.7 475.3" stroke="url(#gr2)" stroke-width="3.50"/><path d="M383.8 475.3 L400.8 491.5" stroke="url(#gr1)" stroke-width="3.80"/>
</g>
<line x1="374.4" y1="85.5" x2="357.2" y2="464.0" stroke="url(#gll)" stroke-width="2.4"/>
<line x1="398.2" y1="85.5" x2="400.6" y2="464.0" stroke="url(#glr)" stroke-width="2.4"/>
<line x1="373.2" y1="86.4" x2="399.4" y2="86.4" stroke="#2a5a8a" stroke-width="1.8"/>
<line x1="373.4" y1="102.9" x2="398.5" y2="102.9" stroke="#1e4a80" stroke-width="1.8" opacity="1.00"/>
<line x1="372.7" y1="119.1" x2="398.6" y2="119.1" stroke="#1e4a80" stroke-width="1.8" opacity="1.00"/>
<line x1="371.9" y1="135.3" x2="398.7" y2="135.3" stroke="#1e4a80" stroke-width="1.8" opacity="1.00"/>
<line x1="371.2" y1="151.5" x2="398.8" y2="151.5" stroke="#1e4a80" stroke-width="1.8" opacity="0.98"/>
<line x1="370.5" y1="167.7" x2="398.9" y2="167.7" stroke="#1e4a80" stroke-width="1.8" opacity="0.71"/>
<line x1="369.7" y1="183.8" x2="399.0" y2="183.8" stroke="#1e4a80" stroke-width="1.8" opacity="0.44"/>
<linearGradient id="gladfill" gradientUnits="userSpaceOnUse" x1="0" y1="85" x2="0" y2="465"><stop offset="0" stop-color="#b06a20"/><stop offset="0.3" stop-color="#a88a30"/><stop offset="0.55" stop-color="#98983a"/><stop offset="0.75" stop-color="#5a9a80"/><stop offset="1" stop-color="#4a8a90"/></linearGradient>
<linearGradient id="gladA" gradientUnits="userSpaceOnUse" x1="0" y1="85" x2="0" y2="465"><stop offset="0" stop-color="#f0a828"/><stop offset="0.3" stop-color="#e8b830"/><stop offset="0.5" stop-color="#c8c040"/><stop offset="0.7" stop-color="#88b860"/><stop offset="0.85" stop-color="#50a0b0"/><stop offset="1" stop-color="#50a0b0"/></linearGradient>
<linearGradient id="gladB" gradientUnits="userSpaceOnUse" x1="0" y1="85" x2="0" y2="465"><stop offset="0" stop-color="#f0a020"/><stop offset="0.3" stop-color="#e8a830"/><stop offset="0.5" stop-color="#d0a838"/><stop offset="0.7" stop-color="#b09050"/><stop offset="0.85" stop-color="#4a88c0"/><stop offset="1" stop-color="#4a88c0"/></linearGradient>
<linearGradient id="gladC" gradientUnits="userSpaceOnUse" x1="0" y1="85" x2="0" y2="465"><stop offset="0" stop-color="#d04818"/><stop offset="0.3" stop-color="#d86a20"/><stop offset="0.5" stop-color="#d09030"/><stop offset="0.7" stop-color="#a0a050"/><stop offset="0.85" stop-color="#4aa0a0"/><stop offset="1" stop-color="#4aa0a0"/></linearGradient>
<polygon points="381.4,85.5 389.6,85.5 384.0,464.0 374.6,464.0" fill="url(#gladfill)"/>
<line x1="382.22" y1="85.5" x2="375.54" y2="464.0" stroke="url(#gladA)" stroke-width="1.3"/>
<line x1="385.50" y1="85.5" x2="379.30" y2="464.0" stroke="url(#gladB)" stroke-width="1.4"/>
<line x1="388.78" y1="85.5" x2="383.06" y2="464.0" stroke="url(#gladC)" stroke-width="1.4"/>
<rect x="383.2" y="88.0" width="1.3" height="2.1" fill="#5a200c"/><rect x="386.4" y="88.0" width="1.3" height="2.1" fill="#5a200c"/><rect x="383.1" y="93.0" width="1.3" height="2.1" fill="#5a200c"/><rect x="386.3" y="93.0" width="1.3" height="2.1" fill="#5a200c"/><rect x="383.0" y="98.0" width="1.3" height="2.1" fill="#5a200c"/><rect x="386.2" y="98.0" width="1.3" height="2.1" fill="#5a200c"/><rect x="382.9" y="103.0" width="1.3" height="2.1" fill="#5a200c"/><rect x="386.1" y="103.0" width="1.3" height="2.1" fill="#5a200c"/><rect x="382.8" y="108.0" width="1.3" height="2.1" fill="#5a200c"/><rect x="386.0" y="108.0" width="1.3" height="2.1" fill="#5a200c"/><rect x="382.7" y="113.0" width="1.3" height="2.1" fill="#5a200c"/><rect x="386.0" y="113.0" width="1.3" height="2.1" fill="#5a200c"/><rect x="382.6" y="118.0" width="1.3" height="2.1" fill="#5a200c"/><rect x="385.9" y="118.0" width="1.3" height="2.1" fill="#5a200c"/><rect x="382.6" y="123.0" width="1.3" height="2.1" fill="#5a200c"/><rect x="385.8" y="123.0" width="1.3" height="2.1" fill="#5a200c"/><rect x="382.5" y="128.0" width="1.3" height="2.1" fill="#5a200c"/><rect x="385.7" y="128.0" width="1.3" height="2.1" fill="#5a200c"/><rect x="382.4" y="133.0" width="1.3" height="2.1" fill="#5a200c"/><rect x="385.6" y="133.0" width="1.3" height="2.1" fill="#5a200c"/><rect x="382.3" y="138.0" width="1.3" height="2.1" fill="#5a200c"/><rect x="385.6" y="138.0" width="1.3" height="2.1" fill="#5a200c"/><rect x="382.2" y="143.0" width="1.3" height="2.1" fill="#5a200c"/><rect x="385.5" y="143.0" width="1.3" height="2.1" fill="#5a200c"/><rect x="382.1" y="148.0" width="1.3" height="2.1" fill="#5a200c"/><rect x="385.4" y="148.0" width="1.3" height="2.1" fill="#5a200c"/><rect x="382.0" y="153.0" width="1.3" height="2.1" fill="#5a200c"/><rect x="385.3" y="153.0" width="1.3" height="2.1" fill="#5a200c"/><rect x="382.0" y="158.0" width="1.3" height="2.1" fill="#5a200c"/><rect x="385.2" y="158.0" width="1.3" height="2.1" fill="#5a200c"/><rect x="381.9" y="163.0" width="1.4" height="2.1" fill="#5a200c"/><rect x="385.2" y="163.0" width="1.4" height="2.1" fill="#5a200c"/><rect x="381.8" y="168.0" width="1.4" height="2.1" fill="#5a200c"/><rect x="385.1" y="168.0" width="1.4" height="2.1" fill="#5a200c"/><rect x="381.7" y="173.0" width="1.4" height="2.1" fill="#5a200c"/><rect x="385.0" y="173.0" width="1.4" height="2.1" fill="#5a200c"/><rect x="381.6" y="178.0" width="1.4" height="2.1" fill="#5a200c"/><rect x="384.9" y="178.0" width="1.4" height="2.1" fill="#5a200c"/><rect x="381.5" y="183.0" width="1.4" height="2.1" fill="#5a200c"/><rect x="384.8" y="183.0" width="1.4" height="2.1" fill="#5a200c"/><rect x="381.4" y="188.0" width="1.4" height="2.1" fill="#5a200c"/><rect x="384.8" y="188.0" width="1.4" height="2.1" fill="#5a200c"/><rect x="381.3" y="193.0" width="1.4" height="2.1" fill="#5a200c"/><rect x="384.7" y="193.0" width="1.4" height="2.1" fill="#5a200c"/><rect x="381.3" y="198.0" width="1.4" height="2.1" fill="#5a200c"/><rect x="384.6" y="198.0" width="1.4" height="2.1" fill="#5a200c"/><rect x="381.2" y="203.0" width="1.4" height="2.1" fill="#5a200c"/><rect x="384.5" y="203.0" width="1.4" height="2.1" fill="#5a200c"/><rect x="381.1" y="208.0" width="1.4" height="2.1" fill="#5a200c"/><rect x="384.4" y="208.0" width="1.4" height="2.1" fill="#5a200c"/><rect x="381.0" y="213.0" width="1.4" height="2.1" fill="#5a200c"/><rect x="384.4" y="213.0" width="1.4" height="2.1" fill="#5a200c"/><rect x="380.9" y="218.0" width="1.4" height="2.1" fill="#5a200c"/><rect x="384.3" y="218.0" width="1.4" height="2.1" fill="#5a200c"/><rect x="380.8" y="223.0" width="1.4" height="2.1" fill="#5a200c"/><rect x="384.2" y="223.0" width="1.4" height="2.1" fill="#5a200c"/><rect x="380.7" y="228.0" width="1.4" height="2.1" fill="#5a200c"/><rect x="384.1" y="228.0" width="1.4" height="2.1" fill="#5a200c"/><rect x="380.7" y="233.0" width="1.4" height="2.1" fill="#5a200c"/><rect x="384.0" y="233.0" width="1.4" height="2.1" fill="#5a200c"/><rect x="380.6" y="238.0" width="1.4" height="2.1" fill="#5a200c"/><rect x="384.0" y="238.0" width="1.4" height="2.1" fill="#5a200c"/><rect x="380.5" y="243.0" width="1.4" height="2.1" fill="#5a200c"/><rect x="383.9" y="243.0" width="1.4" height="2.1" fill="#5a200c"/><rect x="380.4" y="248.0" width="1.4" height="2.1" fill="#5a200c"/><rect x="383.8" y="248.0" width="1.4" height="2.1" fill="#5a200c"/><rect x="380.3" y="253.0" width="1.4" height="2.1" fill="#5a200c"/><rect x="383.7" y="253.0" width="1.4" height="2.1" fill="#5a200c"/><rect x="380.2" y="258.0" width="1.4" height="2.1" fill="#5a200c"/><rect x="383.6" y="258.0" width="1.4" height="2.1" fill="#5a200c"/><rect x="380.1" y="263.0" width="1.4" height="2.1" fill="#5a200c"/><rect x="383.6" y="263.0" width="1.4" height="2.1" fill="#5a200c"/><rect x="380.1" y="268.0" width="1.4" height="2.1" fill="#5a200c"/><rect x="383.5" y="268.0" width="1.4" height="2.1" fill="#5a200c"/><rect x="380.0" y="273.0" width="1.4" height="2.1" fill="#5a200c"/><rect x="383.4" y="273.0" width="1.4" height="2.1" fill="#5a200c"/><rect x="379.9" y="278.0" width="1.4" height="2.1" fill="#5a200c"/><rect x="383.3" y="278.0" width="1.4" height="2.1" fill="#5a200c"/><rect x="379.8" y="283.0" width="1.4" height="2.1" fill="#5a200c"/><rect x="383.2" y="283.0" width="1.4" height="2.1" fill="#5a200c"/><rect x="379.7" y="288.0" width="1.4" height="2.1" fill="#5a200c"/><rect x="383.2" y="288.0" width="1.4" height="2.1" fill="#5a200c"/><rect x="379.6" y="293.0" width="1.4" height="2.1" fill="#5a200c"/><rect x="383.1" y="293.0" width="1.4" height="2.1" fill="#5a200c"/><rect x="379.5" y="298.0" width="1.4" height="2.1" fill="#5a200c"/><rect x="383.0" y="298.0" width="1.4" height="2.1" fill="#5a200c"/><rect x="379.4" y="303.0" width="1.4" height="2.1" fill="#5a200c"/><rect x="382.9" y="303.0" width="1.4" height="2.1" fill="#5a200c"/><rect x="379.4" y="308.0" width="1.4" height="2.1" fill="#5a200c"/><rect x="382.8" y="308.0" width="1.4" height="2.1" fill="#5a200c"/><rect x="379.3" y="313.0" width="1.4" height="2.1" fill="#5a200c"/><rect x="382.8" y="313.0" width="1.4" height="2.1" fill="#5a200c"/><rect x="379.2" y="318.0" width="1.4" height="2.1" fill="#5a200c"/><rect x="382.7" y="318.0" width="1.4" height="2.1" fill="#5a200c"/><rect x="379.1" y="323.0" width="1.4" height="2.1" fill="#5a200c"/><rect x="382.6" y="323.0" width="1.4" height="2.1" fill="#5a200c"/><rect x="379.0" y="328.0" width="1.4" height="2.1" fill="#5a200c"/><rect x="382.5" y="328.0" width="1.4" height="2.1" fill="#5a200c"/><rect x="378.9" y="333.0" width="1.4" height="2.1" fill="#26344a"/><rect x="382.4" y="333.0" width="1.4" height="2.1" fill="#26344a"/><rect x="378.8" y="338.0" width="1.4" height="2.1" fill="#26344a"/><rect x="382.4" y="338.0" width="1.4" height="2.1" fill="#26344a"/><rect x="378.8" y="343.0" width="1.4" height="2.1" fill="#26344a"/><rect x="382.3" y="343.0" width="1.4" height="2.1" fill="#26344a"/><rect x="378.7" y="348.0" width="1.4" height="2.1" fill="#26344a"/><rect x="382.2" y="348.0" width="1.4" height="2.1" fill="#26344a"/><rect x="378.6" y="353.0" width="1.4" height="2.1" fill="#26344a"/><rect x="382.1" y="353.0" width="1.4" height="2.1" fill="#26344a"/><rect x="378.5" y="358.0" width="1.5" height="2.1" fill="#26344a"/><rect x="382.0" y="358.0" width="1.5" height="2.1" fill="#26344a"/><rect x="378.4" y="363.0" width="1.5" height="2.1" fill="#26344a"/><rect x="382.0" y="363.0" width="1.5" height="2.1" fill="#26344a"/><rect x="378.3" y="368.0" width="1.5" height="2.1" fill="#26344a"/><rect x="381.9" y="368.0" width="1.5" height="2.1" fill="#26344a"/><rect x="378.2" y="373.0" width="1.5" height="2.1" fill="#26344a"/><rect x="381.8" y="373.0" width="1.5" height="2.1" fill="#26344a"/><rect x="378.2" y="378.0" width="1.5" height="2.1" fill="#26344a"/><rect x="381.7" y="378.0" width="1.5" height="2.1" fill="#26344a"/><rect x="378.1" y="383.0" width="1.5" height="2.1" fill="#26344a"/><rect x="381.6" y="383.0" width="1.5" height="2.1" fill="#26344a"/><rect x="378.0" y="388.0" width="1.5" height="2.1" fill="#26344a"/><rect x="381.6" y="388.0" width="1.5" height="2.1" fill="#26344a"/><rect x="377.9" y="393.0" width="1.5" height="2.1" fill="#26344a"/><rect x="381.5" y="393.0" width="1.5" height="2.1" fill="#26344a"/><rect x="377.8" y="398.0" width="1.5" height="2.1" fill="#26344a"/><rect x="381.4" y="398.0" width="1.5" height="2.1" fill="#26344a"/><rect x="377.7" y="403.0" width="1.5" height="2.1" fill="#26344a"/><rect x="381.3" y="403.0" width="1.5" height="2.1" fill="#26344a"/><rect x="377.6" y="408.0" width="1.5" height="2.1" fill="#26344a"/><rect x="381.2" y="408.0" width="1.5" height="2.1" fill="#26344a"/><rect x="377.5" y="413.0" width="1.5" height="2.1" fill="#26344a"/><rect x="381.2" y="413.0" width="1.5" height="2.1" fill="#26344a"/>
<rect x="374.4" y="415.5" width="9.6" height="48" fill="#38c8a8"/>
<rect x="376.5" y="416" width="2.4" height="47" fill="#2a88d8"/>
<rect x="380.6" y="416" width="1.6" height="47" fill="#3aa8e0"/>
<rect x="374.4" y="440" width="9.6" height="23" fill="#60d070" opacity=".4"/>
<rect x="401.8" y="63" width="2.4" height="45" fill="#d85a20"/>
<rect x="404.2" y="60" width="3.2" height="48" fill="#902818"/>
<rect x="408" y="62.5" width="3" height="36.5" fill="#e0d020"/>
<rect x="410.4" y="63" width="1" height="35" fill="#80a020"/>
<line x1="402.5" y1="64" x2="406.5" y2="57" stroke="#6a2a10" stroke-width="1.3"/>
<line x1="405" y1="63" x2="413.5" y2="57" stroke="#e04020" stroke-width="1.2"/>
<rect x="400" y="75" width="2" height="2" fill="#c06020"/>
<circle cx="406.5" cy="107.5" r="3.9" fill="#98a028"/>
<circle cx="405.3" cy="106.3" r="2" fill="#c8a030"/>
<path d="M391.5 110 L400 109 L405 112 L405 118 L398 119 L391.5 117Z" fill="#b05018"/>
<line x1="392" y1="127" x2="404" y2="118" stroke="#a02010" stroke-width="1.8"/>
<line x1="396" y1="104" x2="404" y2="113" stroke="#8a3010" stroke-width="1.3"/>
<rect x="395" y="95" width="3" height="4" fill="#c06a20"/>
<rect x="371.5" y="113" width="3" height="3" fill="#c87020"/>
<path d="M371 300.5 L381 300" stroke="#c84018" stroke-width="2.2"/>
<path d="M371 303 L379 309" stroke="#d03818" stroke-width="2.6"/>
<path d="M368.5 309 L364.5 316" stroke="#c83018" stroke-width="2.6"/>
<path d="M364.2 316 L365.5 320" stroke="#d04020" stroke-width="2.2"/>
<path d="M362.3 325.5 L370.5 319.6" stroke="#d04018" stroke-width="2.2"/>
<path d="M362.5 326 L362.5 334" stroke="#c83818" stroke-width="2.4"/>
<rect x="376" y="325" width="3.2" height="5.5" fill="#c83a18"/>
<circle cx="375" cy="305" r="2.3" fill="#e05020"/>
<circle cx="367.5" cy="310" r="1.6" fill="#d84020"/>
<rect x="401.4" y="426" width="27" height="3.2" fill="#9a3a1a"/>
<circle cx="430" cy="428" r="3" fill="#c82a1a"/>
<rect x="417.2" y="443" width="23.5" height="15.4" fill="#8a8028"/>
<rect x="422" y="443.5" width="1.4" height="15" fill="#b09030"/>
<rect x="428" y="443.5" width="1.2" height="15" fill="#6a7a20"/>
<rect x="434" y="443.5" width="1.4" height="15" fill="#a07a30"/>
<rect x="438.5" y="443.5" width="1.2" height="15" fill="#c07a30"/>
<path d="M425.5 424.5 L420.5 432 L425 437 L420 443" fill="none" stroke="#d02a18" stroke-width="2.6"/>
<path d="M419.5 428 L425.5 440" stroke="#b82018" stroke-width="1.6"/>
<rect x="419" y="444" width="2.2" height="13" fill="#3a9a50"/>
<rect x="421.4" y="446" width="1.6" height="10" fill="#d0c040"/>
<rect x="402.6" y="448.4" width="7" height="15.3" fill="#4a9a40"/>
<rect x="409.6" y="444.3" width="2.9" height="19.4" fill="#e06020"/>
<rect x="412.5" y="450" width="3.5" height="13.7" fill="#9a3a20"/>
<rect x="391.4" y="449" width="10" height="14.7" fill="#9a6a28"/>
<rect x="394" y="449.5" width="1.5" height="14" fill="#c08a38"/>
<rect x="398" y="449.5" width="1.5" height="14" fill="#7a5a20"/>
<path d="M420 458 Q424 456 428 460 Q432 457 436 459 L436 463 Q430 465 424 463 Q421 466 420 462Z" fill="#c82a18"/>
<path d="M423 457 L423 466" stroke="#d03018" stroke-width="2"/>
<path d="M335.5 463.7 L430.7 463.7 L430.7 467.4 L335.5 467.4Z" fill="#8a4a22"/>
<path d="M335.5 463.7 L362 463.7 L362 467.4 L335.5 467.2Z" fill="#7a8a30"/>
<path d="M365 467.2 L430.7 467.2 L430.7 472.4 L372 472.4Z" fill="#6a8a38"/>
<path d="M398 467.2 L430.7 467.2 L432 472.4 L408 472.4Z" fill="#40a080"/>
<path d="M335.5 467.2 L372 467.2 L376 470 L337 469Z" fill="#8a8a30"/>
<rect x="432" y="469.8" width="6" height="2.4" fill="#c03030"/>
</svg><div class="a" style="left:416.5px;top:3px;font-size:5.0px;color:#333;transform:scaleX(0.829)">Trimble RealWorks</div>
<div class="a" style="left:-0.5px;top:12px;font-size:5.0px;color:#262626;transform:scaleX(0.935)">hnung</div>
<div class="a" style="left:24.2px;top:12px;font-size:5.0px;color:#262626;transform:scaleX(0.833)">Oberflächen</div>
<div class="a" style="left:58.6px;top:12px;font-size:5.0px;color:#262626;transform:scaleX(0.877)">Bildverarbeitung</div>
<div class="a" style="left:101.6px;top:12px;font-size:5.0px;color:#262626;transform:scaleX(0.891)">Inspektion</div>
<div class="a" style="left:132.8px;top:12px;font-size:5.0px;color:#262626;transform:scaleX(0.884)">Tankbehälter</div>
<div class="a" style="left:168.8px;top:12px;font-size:5.0px;color:#262626;transform:scaleX(0.857)">Medien</div>
<div class="a" style="left:193.8px;top:12px;font-size:5.0px;color:#262626;transform:scaleX(0.894)">Support</div>
<div class="a" style="left:697.3px;top:12px;font-size:5.0px;color:#262626;transform:scaleX(0.853)">Koordinatensystem</div>
<div class="a" style="left:738.0px;top:11px;font-size:5.0px;color:#222;transform:scaleX(0.848)">Ursprungssystem</div>
<div class="a" style="left:7.2px;top:47px;font-size:4.9px;color:#3a3a3a;transform:scaleX(0.871)">Ausschnitt</div>
<div class="a" style="left:59.3px;top:47px;font-size:4.9px;color:#3a3a3a;transform:scaleX(0.853)">Ansicht</div>
<div class="a" style="left:129.7px;top:47px;font-size:4.9px;color:#3a3a3a;transform:scaleX(0.893)">Einblenden</div>
<div class="a" style="left:193.0px;top:47px;font-size:4.9px;color:#3a3a3a;transform:scaleX(0.908)">Anmerkungen</div>
<div class="a" style="left:224.9px;top:47px;font-size:4.9px;color:#3a3a3a;transform:scaleX(0.791)">Stationsmarkierungen</div>
<div class="a" style="left:435.6px;top:47px;font-size:4.9px;color:#3a3a3a;transform:scaleX(0.877)">Einfärben</div>
<div class="a" style="left:686.0px;top:47px;font-size:4.9px;color:#3a3a3a;transform:scaleX(0.891)">Fenster</div>
<div class="a" style="left:0.0px;top:35px;font-size:4.9px;color:#333333;transform:scaleX(0.842)">eige</div>
<div class="a" style="left:0.0px;top:40px;font-size:4.9px;color:#333333;transform:scaleX(0.898)">lles</div>
<div class="a" style="left:11.4px;top:35px;font-size:4.9px;color:#a4a4a4;transform:scaleX(0.836)">Gewählte</div>
<div class="a" style="left:12.6px;top:40px;font-size:4.9px;color:#a4a4a4;transform:scaleX(0.882)">Objekte</div>
<div class="a" style="left:45.5px;top:35px;font-size:4.9px;color:#333333;transform:scaleX(0.890)">Vorne</div>
<svg class="a" style="left:50.0px;top:40.2px" width="2.2" height="1.3" viewBox="0 0 2.2 1.3"><path d="M0 0 L2.2 0 L1.10 1.32Z" fill="#777"/></svg>
<div class="a" style="left:62.9px;top:35px;font-size:4.9px;color:#a4a4a4;transform:scaleX(0.867)">Vorderseite</div>
<svg class="a" style="left:85.8px;top:40.2px" width="2.2" height="1.3" viewBox="0 0 2.2 1.3"><path d="M0 0 L2.2 0 L1.10 1.32Z" fill="#a4a4a4"/></svg>
<div class="a" style="left:59.9px;top:40px;font-size:4.9px;color:#a4a4a4;transform:scaleX(0.955)">des Objekts</div>
<div class="a" style="left:101.8px;top:23px;font-size:4.9px;color:#a4a4a4;transform:scaleX(0.888)">Wolke einblenden</div>
<div class="a" style="left:101.8px;top:31px;font-size:4.9px;color:#a4a4a4;transform:scaleX(0.890)">Wolke ausblenden</div>
<div class="a" style="left:101.8px;top:39px;font-size:4.9px;color:#a4a4a4;transform:scaleX(0.844)">Nur dieses anzeigen</div>
<div class="a" style="left:149.9px;top:23px;font-size:4.9px;color:#a4a4a4;transform:scaleX(0.864)">Formen einblenden</div>
<div class="a" style="left:149.9px;top:31px;font-size:4.9px;color:#a4a4a4;transform:scaleX(0.867)">Formen ausblenden</div>
<div class="a" style="left:149.3px;top:39px;font-size:4.9px;color:#1e1e1e;font-weight:bold;transform:scaleX(0.806)">Alles ausblenden</div>
<div class="a" style="left:199.0px;top:35px;font-size:4.9px;color:#a4a4a4;transform:scaleX(1.040)">Alle</div>
<div class="a" style="left:193.8px;top:40px;font-size:4.9px;color:#a4a4a4;transform:scaleX(0.900)">anzeigen</div>
<div class="a" style="left:227.3px;top:35px;font-size:4.9px;color:#333333;transform:scaleX(0.868)">Anzeige der</div>
<div class="a" style="left:229.5px;top:40px;font-size:4.9px;color:#333333;transform:scaleX(0.869)">Stationen</div>
<div class="a" style="left:267.8px;top:35px;font-size:4.9px;color:#333333;transform:scaleX(0.905)">Farbkodierte</div>
<svg class="a" style="left:289.0px;top:40.2px" width="2.2" height="1.3" viewBox="0 0 2.2 1.3"><path d="M0 0 L2.2 0 L1.10 1.32Z" fill="#555"/></svg>
<div class="a" style="left:269.3px;top:40px;font-size:4.9px;color:#333333;transform:scaleX(0.930)">Intensität</div>
<div class="a" style="left:296.5px;top:35px;font-size:4.9px;color:#333333;transform:scaleX(0.782)">Keine</div>
<svg class="a" style="left:304.8px;top:40.2px" width="2.2" height="1.3" viewBox="0 0 2.2 1.3"><path d="M0 0 L2.2 0 L1.10 1.32Z" fill="#555"/></svg>
<div class="a" style="left:295.0px;top:40px;font-size:4.9px;color:#333333;transform:scaleX(0.790)">Filter</div>
<div class="a" style="left:324.4px;top:35px;font-size:4.9px;color:#333333;transform:scaleX(0.838)">Verbesserte</div>
<svg class="a" style="left:355.5px;top:40.2px" width="2.2" height="1.3" viewBox="0 0 2.2 1.3"><path d="M0 0 L2.2 0 L1.10 1.32Z" fill="#555"/></svg>
<div class="a" style="left:309.3px;top:40px;font-size:4.9px;color:#333333;transform:scaleX(0.847)">Umgebungsschattierung</div>
<div class="a" style="left:368.2px;top:35px;font-size:4.9px;color:#333333">3</div>
<svg class="a" style="left:373.6px;top:40.2px" width="2.2" height="1.3" viewBox="0 0 2.2 1.3"><path d="M0 0 L2.2 0 L1.10 1.32Z" fill="#555"/></svg>
<div class="a" style="left:363.0px;top:40px;font-size:4.9px;color:#333333;transform:scaleX(0.885)">Pixel</div>
<div class="a" style="left:384.9px;top:23px;font-size:4.9px;color:#333333;transform:scaleX(0.881)">Adaptive Punktgröße</div>
<div class="a" style="left:384.9px;top:31px;font-size:4.9px;color:#333333;transform:scaleX(0.896)">Wolkeneinfärbungs Einstellungen</div>
<div class="a" style="left:384.9px;top:39px;font-size:4.9px;color:#333333;transform:scaleX(0.879)">Graustufen-Intensität mit Farbe</div>
<div class="a" style="left:460.1px;top:23px;font-size:4.9px;color:#333333;transform:scaleX(0.887)">Beleuchtungsrichtung</div>
<div class="a" style="left:460.1px;top:31px;font-size:4.9px;color:#333333;transform:scaleX(0.891)">Diskontinuitäts-Display</div>
<div class="a" style="left:460.1px;top:39px;font-size:4.9px;color:#333333;transform:scaleX(0.794)">Umriss</div>
<div class="a" style="left:506.5px;top:35px;font-size:4.9px;color:#333333;transform:scaleX(0.874)">Wolken-Transparenz</div>
<svg class="a" style="left:525.2px;top:40.2px" width="2.2" height="1.3" viewBox="0 0 2.2 1.3"><path d="M0 0 L2.2 0 L1.10 1.32Z" fill="#777"/></svg>
<div class="a" style="left:549.0px;top:35px;font-size:4.9px;color:#333333;transform:scaleX(0.918)">Ortho-Photo</div>
<svg class="a" style="left:571.8px;top:40.2px" width="2.2" height="1.3" viewBox="0 0 2.2 1.3"><path d="M0 0 L2.2 0 L1.10 1.32Z" fill="#555"/></svg>
<div class="a" style="left:548.0px;top:40px;font-size:4.9px;color:#333333;transform:scaleX(0.827)">Transparenz</div>
<div class="a" style="left:576.3px;top:35px;font-size:4.9px;color:#333333;transform:scaleX(0.868)">Texturiert</div>
<svg class="a" style="left:584.0px;top:40.2px" width="2.2" height="1.3" viewBox="0 0 2.2 1.3"><path d="M0 0 L2.2 0 L1.10 1.32Z" fill="#777"/></svg>
<div class="a" style="left:603.0px;top:35px;font-size:4.9px;color:#333333;transform:scaleX(0.880)">Glatte</div>
<div class="a" style="left:596.0px;top:40px;font-size:4.9px;color:#333333;transform:scaleX(0.868)">Vermaschung</div>
<div class="a" style="left:627.7px;top:35px;font-size:4.9px;color:#333333;transform:scaleX(0.803)">Klassifizierungsebene</div>
<div class="a" style="left:668.4px;top:35px;font-size:4.9px;color:#333333;transform:scaleX(1.094)">Auswahlbox</div>
<div class="a" style="left:704.3px;top:35px;font-size:4.9px;color:#333333;transform:scaleX(0.861)">Verankerte</div>
<div class="a" style="left:699.4px;top:40px;font-size:4.9px;color:#333333;transform:scaleX(0.828)">Bereiche sperren</div>
<svg class="a" style="left:59.8px;top:4.1px" width="2.2" height="1.3" viewBox="0 0 2.2 1.3"><path d="M0 0 L2.2 0 L1.10 1.32Z" fill="#777"/></svg>
<div class="a" style="left:549.0px;top:10px;font-size:4.8px;color:#2a2000;transform:scaleX(0.888)">Ausschnittsbearbeiter</div>
<svg class="a" style="left:641.6px;top:8.9px" width="3" height="3" viewBox="0 0 3 3"><path d="M0.3 0.3 L2.7 2.7 M2.7 0.3 L0.3 2.7" stroke="#555" stroke-width=".55"/></svg>
<div class="a" style="left:4.0px;top:481px;font-size:4.9px;color:#444;transform:scaleX(0.869)">Eigenschaften</div>
<div class="a" style="left:10.0px;top:489px;font-size:4.6px;color:#1e1e1e;font-weight:bold;transform:scaleX(0.860)">Keine Auswahl</div>
<div class="a" style="left:51.0px;top:467px;font-size:5.0px;color:#333;transform:scaleX(0.985)">5.000 m</div></div></body></html>
